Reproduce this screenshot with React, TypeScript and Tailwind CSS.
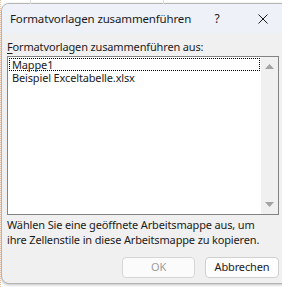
import React from "react";

const font = { fontFamily: '"Noto Sans", "Open Sans", sans-serif' };

export default function App() {
  return (
    <div
      className="w-[282px] h-[287px] overflow-hidden bg-white relative text-[11px] tracking-[-0.15px] text-[#1b1b1b]"
      style={font}
    >
      {/* background grid lines of the spreadsheet behind */}
      <div className="absolute left-[30px] top-0 w-px h-[4px] bg-[#dcdcdc]" />
      <div className="absolute left-[163px] top-0 w-px h-[4px] bg-[#dcdcdc]" />
      <div className="absolute left-0 top-0 w-px h-full border-l border-dotted border-[#ecc4a4]" />

      <div className="ml-[1px] mt-[3px] w-[300px] h-[281px] border border-[#b4b4b4] rounded-tl-[8px] rounded-bl-[8px] bg-[#f0f0f0] overflow-hidden flex flex-col shadow-[0_1px_3px_rgba(0,0,0,0.25)]">
        {/* title bar */}
        <div className="h-[29px] shrink-0 bg-[#eef2f8] flex items-center">
          <div className="pl-[8px] w-[192px] leading-[16px] pt-[1px] whitespace-nowrap text-[11.5px]">
            Formatvorlagen zusammenführen
          </div>
          <div className="w-[46px] h-full flex items-center justify-center text-[12px] pt-[1px]">?</div>
          <div className="w-[46px] h-full flex items-center justify-center">
            <svg width="10" height="10" viewBox="0 0 10 10" className="mt-[1px]">
              <path d="M0.5 0.5 L9.5 9.5 M9.5 0.5 L0.5 9.5" stroke="#1b1b1b" strokeWidth="1" fill="none" />
            </svg>
          </div>
        </div>

        {/* body */}
        <div className="flex flex-col pl-[5px] pt-[6px]">
          <div className="leading-[16px] h-[16px] whitespace-nowrap">
            <span className="underline underline-offset-[2px]">F</span>ormatvorlagen zusammenführen aus:
          </div>
          <div className="mt-[1px] w-[272px] h-[159px] border border-[#828282] bg-white flex">
            <div className="flex-1 flex flex-col pl-[1px]">
              <div className="h-[13px] leading-[11px] border border-dotted border-black pl-[2px] mt-[1px] whitespace-nowrap">
                Mappe1
              </div>
              <div className="h-[13px] leading-[13px] pl-[3px] whitespace-nowrap">Beispiel Exceltabelle.xlsx</div>
            </div>
            <div className="w-[17px] ml-[1px] bg-[#f0f0f0] flex flex-col items-center justify-between py-[7px]">
              <svg width="9" height="5" viewBox="0 0 9 5">
                <path d="M0 5 L4.5 0 L9 5 Z" fill="#a3a3a3" />
              </svg>
              <svg width="9" height="5" viewBox="0 0 9 5">
                <path d="M0 0 L9 0 L4.5 5 Z" fill="#a3a3a3" />
              </svg>
            </div>
          </div>
          <div className="mt-[2px] leading-[15px] whitespace-nowrap">
            Wählen Sie eine geöffnete Arbeitsmappe aus, um
            <br />
            ihre Zellenstile in diese Arbeitsmappe zu kopieren.
          </div>
          <div className="mt-[10px] w-[272px] flex justify-end gap-[10px]">
            <div className="w-[73px] h-[21px] rounded-[4px] border border-[#d6d6d6] bg-[#fbfbfb] flex items-center justify-center text-[#9d9d9d]">
              OK
            </div>
            <div className="w-[74px] h-[21px] rounded-[4px] border border-[#d0d0d0] bg-[#fdfdfd] flex items-center justify-center">
              Abbrechen
            </div>
          </div>
        </div>
      </div>
    </div>
  );
}
